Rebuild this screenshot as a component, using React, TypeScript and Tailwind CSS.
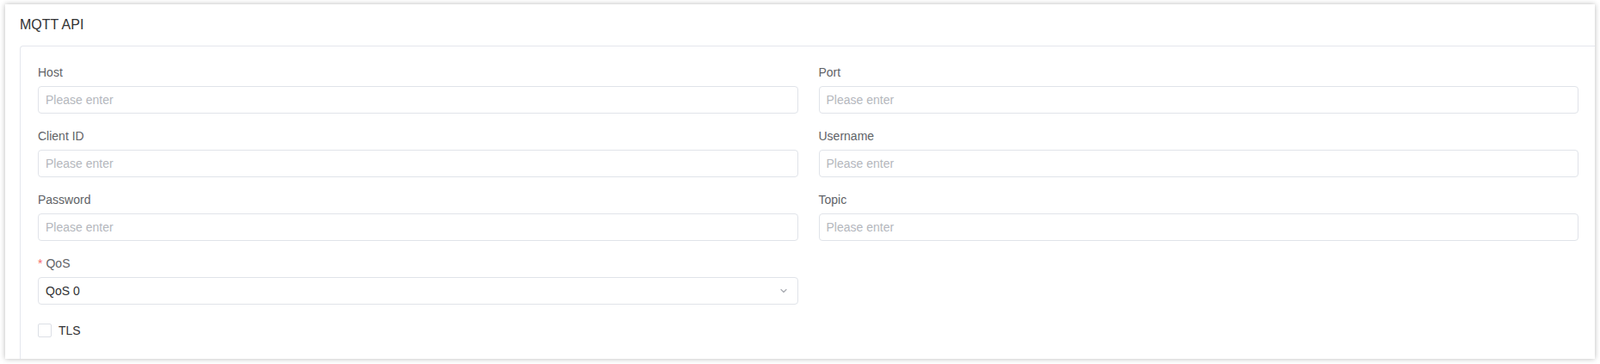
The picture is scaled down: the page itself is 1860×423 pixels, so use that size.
import { useState } from 'react'

const FIELDS: { label: string; key: string }[] = [
  { label: 'Host', key: 'host' },
  { label: 'Port', key: 'port' },
  { label: 'Client ID', key: 'clientId' },
  { label: 'Username', key: 'username' },
  { label: 'Password', key: 'password' },
  { label: 'Topic', key: 'topic' },
]

function Field({ label, value, onChange, type }: { label: string; value: string; onChange: (v: string) => void; type?: string }) {
  return (
    <div className="mb-[18px] min-w-0">
      <div className="h-4 leading-4 mb-2 text-[14px] text-[#606266]">{label}</div>
      <input
        type={type ?? 'text'}
        value={value}
        onChange={e => onChange(e.target.value)}
        placeholder="Please enter"
        className="block w-full h-8 px-2 rounded-[4px] border border-[#e0e3e9] bg-white text-[14px] text-[#303133] outline-none placeholder:text-[#b4b7bd]"
      />
    </div>
  )
}

export default function App() {
  const [values, setValues] = useState<Record<string, string>>({})
  const [tls, setTls] = useState(false)

  return (
    <div className="w-full h-[423px] bg-white pl-[6px] pr-[6px] pt-[5px] font-['Liberation_Sans',Arial,sans-serif]">
      <div className="bg-white shadow-[0_0_6px_rgba(0,0,0,0.28)] overflow-hidden">
        {/* header */}
        <div className="h-12 flex items-center px-[17px]">
          <h2 className="text-[16px] text-[#303133]">MQTT API</h2>
        </div>

        {/* form body */}
        <div className="ml-[17px] border-l border-t border-[#e4e7ed] rounded-tl-[4px] pl-5 pr-[19px] pt-[22px] pb-[21px]">
          <div className="grid grid-cols-2 gap-x-6">
            {FIELDS.map(f => (
              <Field
                key={f.key}
                label={f.label}
                type={f.key === 'password' ? 'password' : 'text'}
                value={values[f.key] ?? ''}
                onChange={v => setValues(s => ({ ...s, [f.key]: v }))}
              />
            ))}

            <div className="mb-[18px] min-w-0">
              <div className="h-4 leading-4 mb-2 text-[14px] text-[#606266] flex items-center">
                <span className="text-[#f56c6c] mr-1">*</span>
                <span>QoS</span>
              </div>
              <div className="h-8 flex items-center justify-between pl-2 pr-[11px] rounded-[4px] border border-[#e0e3e9] bg-white cursor-pointer">
                <span className="text-[14px] text-[#303133]">QoS 0</span>
                <svg width="10" height="10" viewBox="0 0 10 10" fill="none">
                  <path d="M2 3.5 L5 6.5 L8 3.5" stroke="#a8abb2" strokeWidth="1.2" strokeLinecap="round" strokeLinejoin="round" />
                </svg>
              </div>
            </div>
            <div />
          </div>

          <label className="h-6 flex items-center gap-2 cursor-pointer w-max">
            <input type="checkbox" checked={tls} onChange={e => setTls(e.target.checked)} className="sr-only" />
            <span className="w-4 h-4 rounded-[2px] border border-[#dcdfe6] bg-white" />
            <span className="text-[14px] text-[#303133]">TLS</span>
          </label>
        </div>
      </div>
    </div>
  )
}
